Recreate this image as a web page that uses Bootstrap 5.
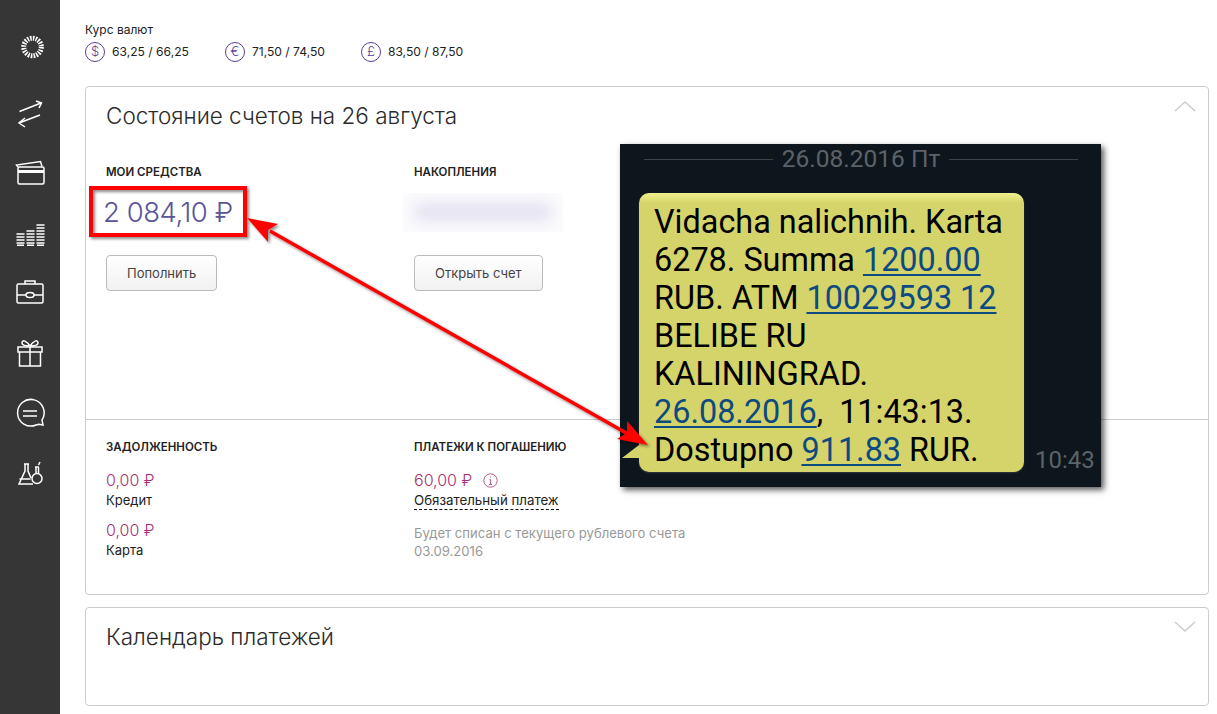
<!DOCTYPE html>
<html lang="ru">
<head>
  <meta charset="UTF-8" />
  <meta name="viewport" content="width=device-width, initial-scale=1" />
  <title>Состояние счетов</title>
  <link href="https://cdn.jsdelivr.net/npm/bootstrap@5.3.0/dist/css/bootstrap.min.css" rel="stylesheet" />
  <style>
    /* page frame */
    html, body { height: 714px; overflow: hidden; }
    body { font-family: Inter, "Open Sans", "Liberation Sans", sans-serif; color: #222; background: #fff; position: relative; }
    .side-rail { width: 60px; background: #363636; padding-top: 17px; flex: none; }
    .side-rail svg { display: block; width: 60px; height: 60px; fill: none; stroke: #fff; stroke-width: 1.5; }
    .main-area { padding: 22px 8px 0 25px; }

    /* exchange rates */
    .rates-label { font-size: 12px; line-height: 16px; }
    .rates-row { gap: 36px; margin-top: 4px; margin-bottom: 24px; }
    .rate-item { font-size: 12.1px; gap: 7px; height: 20px; white-space: nowrap; }
    .coin { width: 20px; height: 20px; border: 1px solid #5b3f94; border-radius: 50%; font-size: 13px; font-weight: 300; color: #5b3f94; flex: none; }

    /* account cards */
    .acc-card { border: 1px solid #ccc; border-radius: 4px; }
    .acc-top { height: 333px; padding: 0 12px 0 20px; border-bottom: 1px solid #ccc; }
    .acc-head { height: 61px; padding-top: 13px; }
    .acc-title { font-size: 22.5px; line-height: 32px; font-weight: 300; color: #2b2b2b; margin: 0; }
    .chev { width: 22px; height: 12px; fill: none; stroke: #ccc; stroke-width: 1.5; margin-top: 0; }
    .col-wide { width: 308px; flex: none; }
    .cap-label { font-size: 11.5px; line-height: 16px; font-weight: 600; color: #222; margin: 0; }
    .amount-big { font-size: 27.5px; letter-spacing: -.45px; font-weight: 300; line-height: 36px; color: #5a5598; margin: 14px 0 25px -3px; height: 36px; white-space: nowrap; }
    .blur-box { height: 39px; width: 160px; margin: 13px 0 23px -11px; background: #fbfbfd; position: relative; overflow: hidden; }
    .blur-box::after { content: ""; position: absolute; left: 12px; right: 12px; top: 10px; height: 18px; background: #e4e2f0; filter: blur(7px); }
    .btn-soft { font-size: 13px; line-height: 20px; color: #444; padding: 7px 20px; height: 36px; border: 1px solid #bbb; border-radius: 4px; background: linear-gradient(#fff, #f1f1f1); }
    .acc-bottom { padding: 19px 20px 0; height: 174px; }
    .debt-val { font-size: 16px; line-height: 22px; color: #a52f74; font-weight: 300; margin-top: 14px; }
    .debt-next { margin-top: 10px; }
    .debt-note { font-size: 13px; line-height: 18px; color: #222; }
    .dash-note { font-size: 13.3px; border-bottom: 1px dashed #111; line-height: 17px; margin-top: 1px; }
    .grey-note { font-size: 13.1px; line-height: 18px; color: #999; margin-top: 14px; }
    .info-ico { width: 15px; height: 15px; margin-left: 11px; fill: none; stroke: #b5608f; }
    .acc-second { height: 99px; margin-top: 12px; padding: 13px 12px 0 20px; }

    /* pasted SMS screenshot, lies over the card */
    .sms-shot { position: absolute; left: 620px; top: 144px; width: 481px; height: 343px; background: #0e161d; box-shadow: 3px 3px 6px rgba(0,0,0,.65); font-family: Roboto, sans-serif; }
    .sms-date { height: 30px; padding: 0 23px 0 24px; gap: 9px; font-size: 24.5px; color: #5c6368; }
    .sms-date i { flex: 1; height: 1px; background: #3c444a; }
    .sms-bubble { position: absolute; left: 19px; top: 49px; width: 385px; height: 279px; border-radius: 10px; padding: 10px 0 0 15px; background: linear-gradient(#f1ef8c, #d5d46b 10px); font-size: 32.4px; line-height: 38px; color: #000; white-space: nowrap; box-shadow: 0 1px 2px rgba(255,255,255,.15); }
    .sms-bubble a { color: #0d4a80; text-decoration: underline; text-decoration-thickness: 2px; text-underline-offset: 3px; }
    .sms-tail { position: absolute; left: 2px; top: 301px; width: 0; height: 0; border-left: 17px solid transparent; border-bottom: 13px solid #d5d46b; }
    .sms-time { position: absolute; left: 415px; top: 302px; font-size: 24px; line-height: 28px; color: #5c6368; }
    .mark-layer { position: absolute; left: 0; top: 0; width: 1217px; height: 714px; pointer-events: none; }
  </style>
</head>
<body class="d-flex">
  <!-- Left rail -->
  <nav class="side-rail">
    <svg viewBox="0 17 60 60"><circle cx="32.5" cy="47" r="8.8" stroke-width="5" stroke-dasharray="1.6 1.17"/></svg>
    <svg viewBox="0 77 60 60"><path d="M19.5 111.5 41 103M36 101l5.500 2-2.500 5M40 115l-21 8M25 118l-6 5 6 4"/></svg>
    <svg viewBox="0 137 60 60"><path d="M18 167l-1.500-2 24-3.500 1.500 5M19 165v-1"/><rect x="18" y="167" width="26" height="17" rx="1.500"/><path d="M18 171.500h26" stroke-width="3"/></svg>
    <svg viewBox="0 197 60 60"><path d="M17 234h7M17 237h7M17 240h7M17 243h7M27 231h7M27 234h7M27 237h7M27 240h7M27 243h7M37 225h7M37 228h7M37 231h7M37 234h7M37 237h7M37 240h7M37 243h7" stroke-width="1.500" stroke-linecap="round"/><path d="M17 245.300h7M27 245.300h7M37 245.300h7"/></svg>
    <svg viewBox="0 257 60 60"><rect x="17" y="284" width="26" height="19" rx="1.500"/><path d="M25 284v-3h10v3M17 295h9M34 295h9"/><ellipse cx="30" cy="295" rx="4" ry="2.500"/></svg>
    <svg viewBox="0 317 60 60"><rect x="18" y="347" width="24" height="5"/><path d="M19.500 352v14h21v-14M30 347v19M30 346c-3-5-8-7-8-3 0 2 4 3 8 3zM30 346c3-5 8-7 8-3 0 2-4 3-8 3z"/></svg>
    <svg viewBox="0 377 60 60"><path d="M43 425l-1-5a13.300 13.300 0 1 0-6 5l3-.800z"/><path d="M23 411h14M23 416h14"/></svg>
    <svg viewBox="0 437 60 60"><path d="M24 464h5M25 464v7l-6 13h14M28 464v7l3 7M19.500 479h11M35 467h4M36 467v7M38.500 467v7M38.500 465l1.500-3" /><circle cx="37" cy="478.500" r="5"/></svg>
  </nav>

  <main class="main-area flex-fill">
    <!-- Rates -->
    <div class="rates-label">Курс валют</div>
    <div class="rates-row d-flex">
      <div class="rate-item d-flex align-items-center"><span class="coin d-flex align-items-center justify-content-center">$</span>63,25 / 66,25</div>
      <div class="rate-item d-flex align-items-center"><span class="coin d-flex align-items-center justify-content-center">€</span>71,50 / 74,50</div>
      <div class="rate-item d-flex align-items-center"><span class="coin d-flex align-items-center justify-content-center">£</span>83,50 / 87,50</div>
    </div>

    <!-- Accounts card -->
    <section class="acc-card">
      <div class="acc-top">
        <div class="acc-head d-flex justify-content-between">
          <h2 class="acc-title">Состояние счетов на 26 августа</h2>
          <svg class="chev" viewBox="0 0 22 12"><path d="M1 11 11 2l10 9"/></svg>
        </div>
        <div class="d-flex pt-3">
          <div class="col-wide">
            <p class="cap-label">МОИ СРЕДСТВА</p>
            <div class="amount-big">2 084,10 ₽</div>
            <button type="button" class="btn btn-soft">Пополнить</button>
          </div>
          <div class="col-wide">
            <p class="cap-label">НАКОПЛЕНИЯ</p>
            <div class="blur-box"></div>
            <button type="button" class="btn btn-soft">Открыть счет</button>
          </div>
        </div>
      </div>
      <div class="acc-bottom d-flex">
        <div class="col-wide">
          <p class="cap-label">ЗАДОЛЖЕННОСТЬ</p>
          <div class="debt-val">0,00 ₽</div>
          <div class="debt-note">Кредит</div>
          <div class="debt-val debt-next">0,00 ₽</div>
          <div class="debt-note">Карта</div>
        </div>
        <div class="col-wide">
          <p class="cap-label">ПЛАТЕЖИ К ПОГАШЕНИЮ</p>
          <div class="debt-val d-flex align-items-center">60,00 ₽
            <svg class="info-ico" viewBox="0 0 15 15"><circle cx="7.500" cy="7.500" r="6.700"/><path d="M7.500 3.500v1M6.500 6.500h1v5M6 11.500h3"/></svg>
          </div>
          <div class="debt-note"><span class="dash-note d-inline-block">Обязательный платеж</span></div>
          <div class="grey-note">Будет списан с текущего рублевого счета<br>03.09.2016</div>
        </div>
      </div>
    </section>

    <!-- Calendar card -->
    <section class="acc-card acc-second d-flex justify-content-between">
      <h2 class="acc-title">Календарь платежей</h2>
      <svg class="chev" viewBox="0 0 22 12"><path d="M1 1l10 9 10-9"/></svg>
    </section>
  </main>

  <!-- SMS screenshot pasted over the page -->
  <div class="sms-shot">
    <div class="sms-date d-flex align-items-center"><i></i>26.08.2016 Пт<i></i></div>
    <div class="sms-tail"></div>
    <div class="sms-bubble">Vidacha nalichnih. Karta<br>6278. Summa <a href="#">1200.00</a><br>RUB. ATM <a href="#">10029593 12</a><br>BELIBE RU<br>KALININGRAD.<br><a href="#">26.08.2016</a>,&nbsp; 11:43:13.<br>Dostupno <a href="#">911.83</a> RUR.</div>
    <div class="sms-time">10:43</div>
  </div>

  <!-- Red markup: frame and double arrow -->
  <svg class="mark-layer" viewBox="0 0 1217 714">
    <defs><filter id="markShadow" x="-10%" y="-10%" width="120%" height="120%"><feDropShadow dx="2" dy="2" stdDeviation="1.500" flood-color="#000" flood-opacity=".45"/></filter></defs>
    <g filter="url(#markShadow)" fill="#f00">
      <rect x="91" y="188" width="154" height="47" fill="none" stroke="#f00" stroke-width="4"/>
      <path d="M270 231 628 434" stroke="#f00" stroke-width="3.500" fill="none"/>
      <polygon points="247,218 278,224 268,230 268,242"/>
      <polygon points="648,445 617,439 627,433 627,421"/>
    </g>
  </svg>

  <script src="https://cdn.jsdelivr.net/npm/bootstrap@5.3.0/dist/js/bootstrap.bundle.min.js"></script>
</body>
</html>
